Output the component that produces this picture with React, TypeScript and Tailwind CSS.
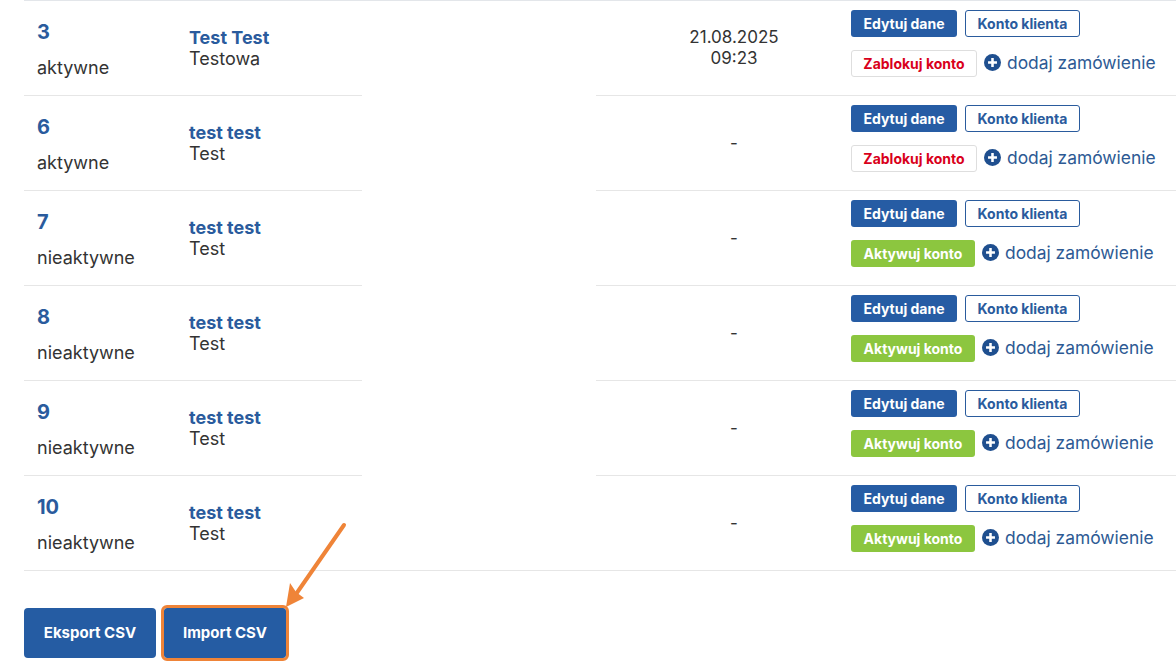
import React from "react";

type Row = {
    id: number;
    active: boolean;
    name: string;
    sub: string;
    date?: [string, string];
};

const rows: Row[] = [
    { id: 3, active: true, name: "Test Test", sub: "Testowa", date: ["21.08.2025", "09:23"] },
    { id: 6, active: true, name: "test test", sub: "Test" },
    { id: 7, active: false, name: "test test", sub: "Test" },
    { id: 8, active: false, name: "test test", sub: "Test" },
    { id: 9, active: false, name: "test test", sub: "Test" },
    { id: 10, active: false, name: "test test", sub: "Test" },
];

function PlusCircle() {
    return (
        <svg width="17" height="17" viewBox="0 0 16 16" className="shrink-0">
            <circle cx="8" cy="8" r="8" fill="#1f4f8f" />
            <path d="M8 3.8v8.4M3.8 8h8.4" stroke="#fff" strokeWidth="2.4" />
        </svg>
    );
}

function ClientRow({ row, last }: { row: Row; last: boolean }) {
    const line = "border-b border-[#e6e6e6]";
    return (
        <div className="flex h-[95px]">
            <div className={`w-[152px] shrink-0 pl-[13px] pt-[19px] ${line}`}>
                <div className="text-[20px] font-bold leading-[24px] text-[#2a5b9d]">{row.id}</div>
                <div className="mt-[12px] text-[18px] leading-[24px] text-[#333]">
                    {row.active ? "aktywne" : "nieaktywne"}
                </div>
            </div>
            <div className={`flex w-[186px] shrink-0 flex-col justify-center pl-[13px] ${line}`}>
                <div className="text-[18px] font-bold leading-[21px] text-[#2a5b9d]">{row.name}</div>
                <div className="text-[18px] leading-[21px] text-[#333]">{row.sub}</div>
            </div>
            <div className={`w-[234px] shrink-0 ${last ? line : ""}`} />
            <div className={`flex w-[242px] shrink-0 flex-col items-center justify-center pl-[34px] text-[17px] leading-[21px] text-[#333] ${line}`}>
                {row.date ? (
                    <>
                        <div>{row.date[0]}</div>
                        <div>{row.date[1]}</div>
                    </>
                ) : (
                    <div>-</div>
                )}
            </div>
            <div className={`flex-1 pl-[13px] pt-[9px] ${line}`}>
                <div className="flex gap-2">
                    <button className="h-[27px] w-[106px] rounded-[3px] bg-[#265ca4] text-[14px] font-bold leading-none text-white">
                        Edytuj dane
                    </button>
                    <button className="h-[27px] w-[115px] rounded-[3px] border border-[#2a5b9d] bg-white text-[14px] font-bold leading-none text-[#2a5b9d]">
                        Konto klienta
                    </button>
                </div>
                <div className="mt-[13px] flex items-center">
                    {row.active ? (
                        <button className="h-[27px] w-[126px] rounded-[3px] border border-[#dedede] bg-white text-[14px] font-bold leading-none text-[#d9001b]">
                            Zablokuj konto
                        </button>
                    ) : (
                        <button className="h-[27px] w-[124px] rounded-[3px] bg-[#8cc63f] text-[14px] font-bold leading-none text-white">
                            Aktywuj konto
                        </button>
                    )}
                    <div className="mb-[2px] ml-[7px] flex items-center gap-[6px] text-[17.4px] leading-[24px] text-[#2d5a94]">
                        <PlusCircle />
                        <span>dodaj zamówienie</span>
                    </div>
                </div>
            </div>
        </div>
    );
}

export default function App() {
    return (
        <div className="relative h-[665px] w-[1176px] overflow-hidden bg-white pl-[24px]" style={{ fontFamily: "Inter, 'Noto Sans', sans-serif" }}>
            <div className="border-t border-[#e3e6ea]">
                {rows.map((r, i) => (
                    <ClientRow key={r.id} row={r} last={i === rows.length - 1} />
                ))}
            </div>
            <div className="mt-[37px] flex items-start">
                <button className="h-[50px] w-[132px] rounded-[4px] bg-[#255ca3] text-[15px] font-bold text-white">
                    Eksport CSV
                </button>
                <button className="ml-[8px] h-[50px] w-[122px] rounded-[3px] bg-[#255ca3] text-[15px] font-bold text-white outline outline-[3px] outline-[#ef8438]">
                    Import CSV
                </button>
            </div>
            <svg className="pointer-events-none absolute left-0 top-0" width="1176" height="665">
                <line x1="344" y1="525" x2="294" y2="597" stroke="#ef8438" strokeWidth="4" strokeLinecap="round" />
                <polygon points="286,607 290,583 296,592 304,598" fill="#ef8438" />
            </svg>
        </div>
    );
}
